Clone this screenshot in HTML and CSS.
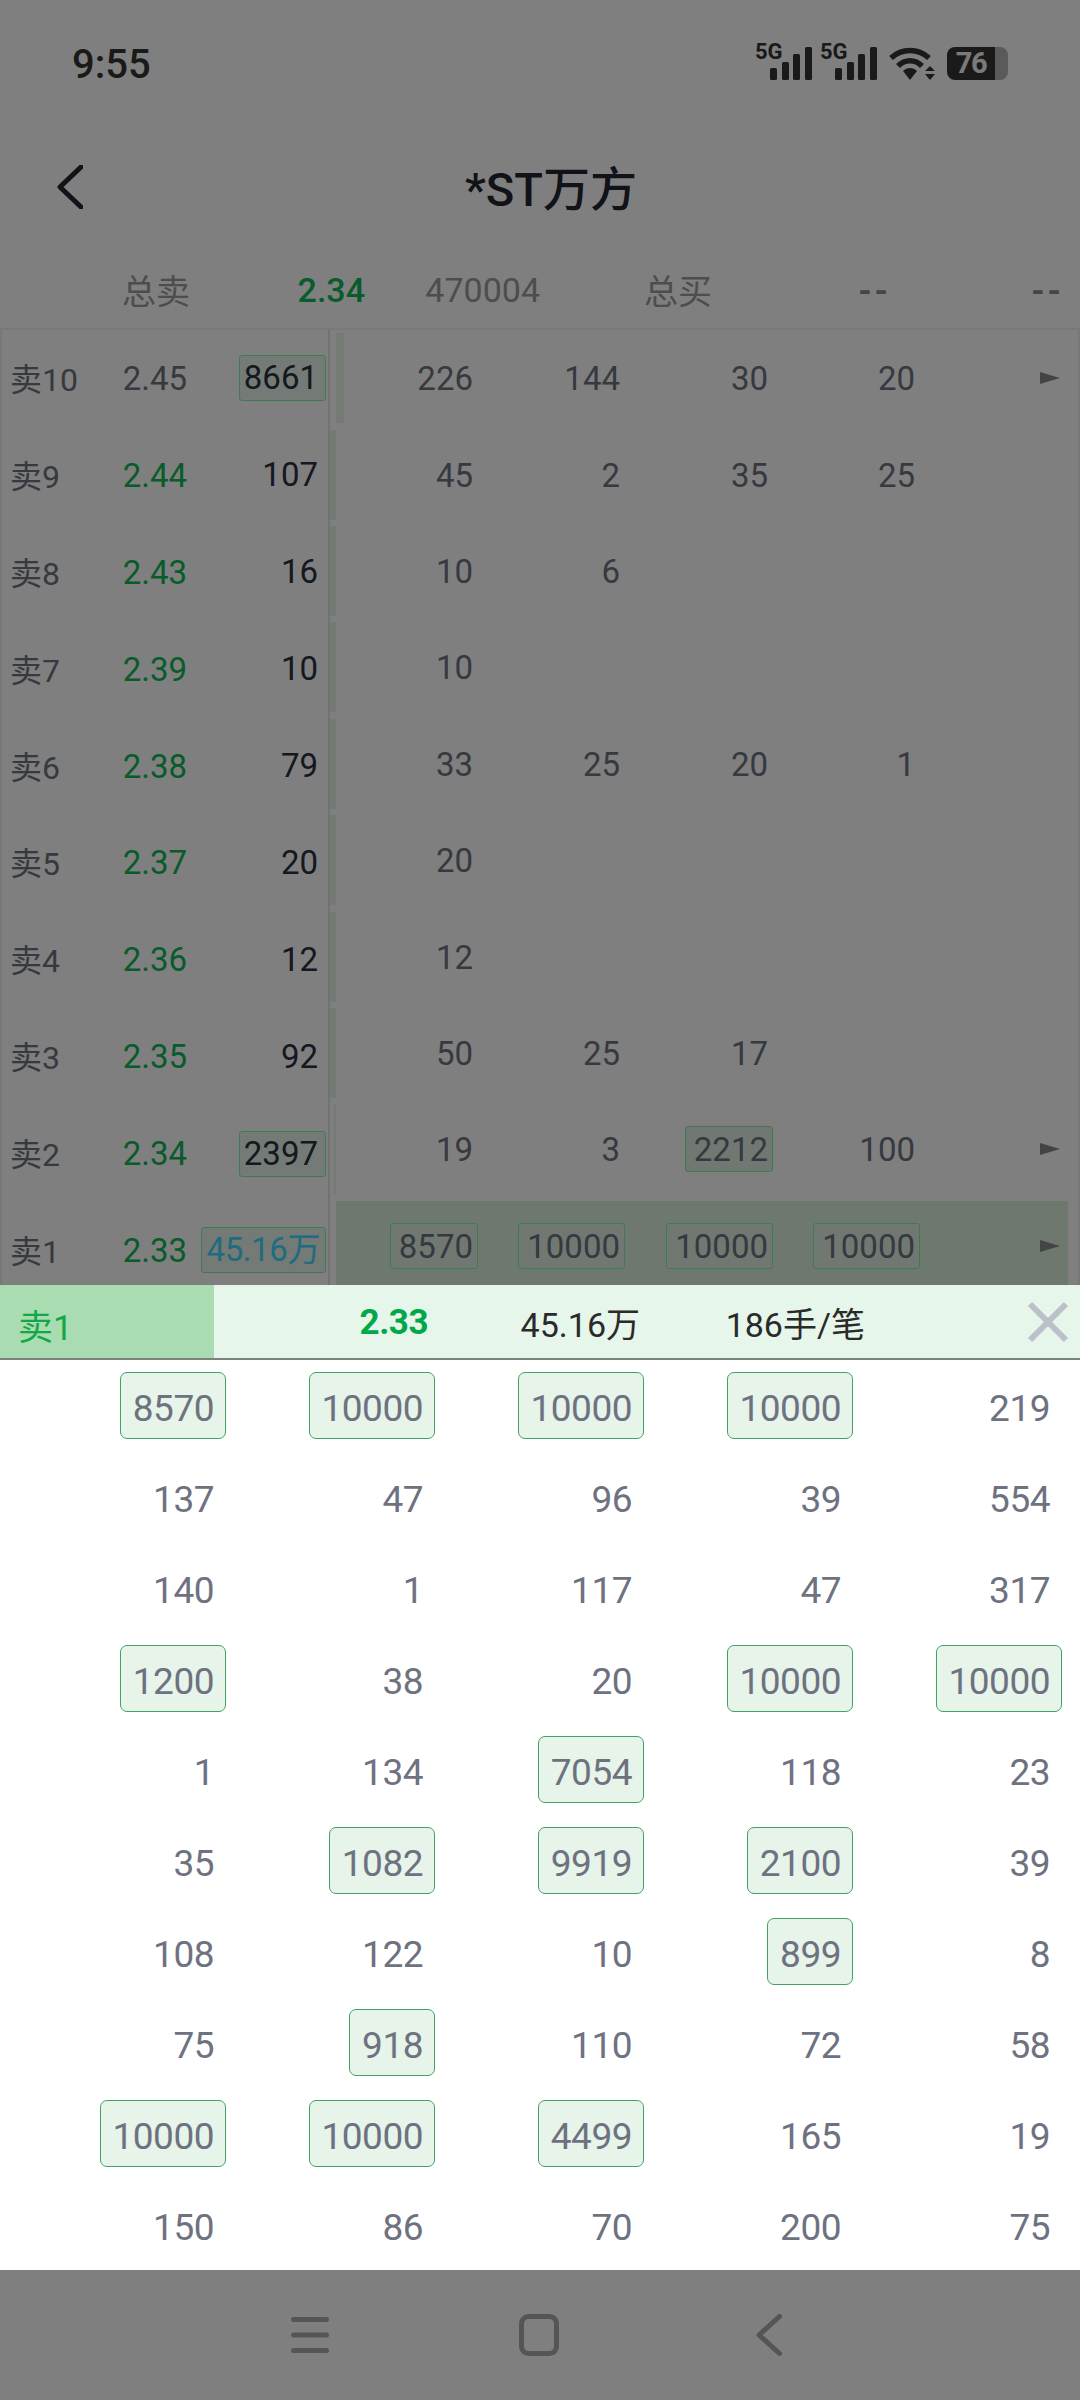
FILE: index.html
```html
<!DOCTYPE html>
<html lang="zh-CN">
<head>
    <meta charset="UTF-8">
    <meta name="viewport" content="width=device-width, initial-scale=1.0">
    <title>*ST万方</title>
    <link rel="stylesheet" href="styles.css">
</head>
<body>
    <div class="screen">
        <div class="top">
            <div class="status-bar">
                <span class="time">9:55</span>
                <div class="status-icons">
                    <svg class="signal" width="59" height="44" viewBox="0 -4 59 44">
                        <text x="0" y="17" class="net">5G</text>
                        <rect x="15" y="26" width="7" height="12" rx="1.5"/>
                        <rect x="27" y="20" width="7" height="18" rx="1.5"/>
                        <rect x="38" y="12" width="7" height="26" rx="1.5"/>
                        <rect x="50" y="5" width="7" height="33" rx="1.5"/>
                    </svg>
                    <svg class="signal" width="59" height="44" viewBox="0 -4 59 44">
                        <text x="0" y="17" class="net">5G</text>
                        <rect x="15" y="26" width="7" height="12" rx="1.5"/>
                        <rect x="27" y="20" width="7" height="18" rx="1.5"/>
                        <rect x="38" y="12" width="7" height="26" rx="1.5"/>
                        <rect x="50" y="5" width="7" height="33" rx="1.5"/>
                    </svg>
                    <svg class="wifi" width="46" height="34" viewBox="0 0 46 34">
                        <path d="M2 11 C13 1 29 1 40 11" fill="none" stroke="#343434" stroke-width="5.5"/>
                        <path d="M9 19 C16 12 26 12 33 19" fill="none" stroke="#343434" stroke-width="5.5"/>
                        <path d="M14 24 C18 20 24 20 28 24 L21 33 Z" fill="#343434"/>
                        <path d="M36 24 L41 19 L46 24 Z M36 27 L46 27 L41 33 Z" fill="#343434"/>
                    </svg>
                    <div class="battery">
                        <div class="battery-fill">76</div>
                        <div class="battery-rest"></div>
                    </div>
                </div>
            </div>

            <div class="title-bar">
                <svg class="back" width="26" height="44" viewBox="0 0 26 44">
                    <path d="M24 2 L3 22 L24 42" fill="none" stroke="#222730" stroke-width="5" stroke-linecap="round" stroke-linejoin="round"/>
                </svg>
                <h1>*ST万方</h1>
            </div>

            <div class="summary">
                <span>总卖</span>
                <span class="price-green bold">2.34</span>
                <span>470004</span>
                <span>总买</span>
                <span class="dash">--</span>
                <span class="dash">--</span>
            </div>

            <div class="book">
                <div class="sell-side">
                    <div class="sell-row"><span class="label">卖10</span><span class="price">2.45</span><span class="qty big">8661</span></div>
                    <div class="sell-row"><span class="label">卖9</span><span class="price price-green">2.44</span><span class="qty">107</span></div>
                    <div class="sell-row"><span class="label">卖8</span><span class="price price-green">2.43</span><span class="qty">16</span></div>
                    <div class="sell-row"><span class="label">卖7</span><span class="price price-green">2.39</span><span class="qty">10</span></div>
                    <div class="sell-row"><span class="label">卖6</span><span class="price price-green">2.38</span><span class="qty">79</span></div>
                    <div class="sell-row"><span class="label">卖5</span><span class="price price-green">2.37</span><span class="qty">20</span></div>
                    <div class="sell-row"><span class="label">卖4</span><span class="price price-green">2.36</span><span class="qty">12</span></div>
                    <div class="sell-row"><span class="label">卖3</span><span class="price price-green">2.35</span><span class="qty">92</span></div>
                    <div class="sell-row"><span class="label">卖2</span><span class="price price-green">2.34</span><span class="qty big">2397</span></div>
                    <div class="sell-row"><span class="label">卖1</span><span class="price price-green">2.33</span><span class="qty big wan">45.16万</span></div>
                </div>
                <div class="orders-side">
                    <div class="order-row">
                        <div class="gutter"></div>
                        <div class="cells bar-inner"><span>226</span><span>144</span><span>30</span><span>20</span><i class="arrow"></i></div>
                    </div>
                    <div class="order-row">
                        <div class="gutter"><div class="bar" style="width: 6px"></div></div>
                        <div class="cells"><span>45</span><span>2</span><span>35</span><span>25</span></div>
                    </div>
                    <div class="order-row">
                        <div class="gutter"><div class="bar" style="width: 6px"></div></div>
                        <div class="cells"><span>10</span><span>6</span></div>
                    </div>
                    <div class="order-row">
                        <div class="gutter"><div class="bar" style="width: 6px"></div></div>
                        <div class="cells"><span>10</span></div>
                    </div>
                    <div class="order-row">
                        <div class="gutter"><div class="bar" style="width: 6px"></div></div>
                        <div class="cells"><span>33</span><span>25</span><span>20</span><span>1</span></div>
                    </div>
                    <div class="order-row">
                        <div class="gutter"><div class="bar" style="width: 6px"></div></div>
                        <div class="cells"><span>20</span></div>
                    </div>
                    <div class="order-row">
                        <div class="gutter"><div class="bar" style="width: 6px"></div></div>
                        <div class="cells"><span>12</span></div>
                    </div>
                    <div class="order-row">
                        <div class="gutter"><div class="bar" style="width: 6px"></div></div>
                        <div class="cells"><span>50</span><span>25</span><span>17</span></div>
                    </div>
                    <div class="order-row">
                        <div class="gutter"><div class="bar" style="width: 2px"></div></div>
                        <div class="cells"><span>19</span><span>3</span><span class="big">2212</span><span>100</span><i class="arrow"></i></div>
                    </div>
                    <div class="order-row">
                        <div class="gutter"></div>
                        <div class="cells bar-full"><span class="big">8570</span><span class="big">10000</span><span class="big">10000</span><span class="big">10000</span><i class="arrow"></i></div>
                    </div>
                </div>
            </div>
        </div>

        <div class="panel">
            <div class="panel-head">
                <div class="panel-label">卖1</div>
                <span class="panel-price">2.33</span>
                <span class="panel-val val-qty">45.16万</span>
                <span class="panel-val val-avg">186手/笔</span>
                <svg class="close" width="42" height="42" viewBox="0 0 42 42">
                    <path d="M3 3 L39 39 M39 3 L3 39" fill="none" stroke="#bcc0c8" stroke-width="6"/>
                </svg>
            </div>
            <div class="panel-grid">
                <span class="cell box">8570</span><span class="cell box">10000</span><span class="cell box">10000</span><span class="cell box">10000</span><span class="cell">219</span>
                <span class="cell">137</span><span class="cell">47</span><span class="cell">96</span><span class="cell">39</span><span class="cell">554</span>
                <span class="cell">140</span><span class="cell">1</span><span class="cell">117</span><span class="cell">47</span><span class="cell">317</span>
                <span class="cell box">1200</span><span class="cell">38</span><span class="cell">20</span><span class="cell box">10000</span><span class="cell box">10000</span>
                <span class="cell">1</span><span class="cell">134</span><span class="cell box">7054</span><span class="cell">118</span><span class="cell">23</span>
                <span class="cell">35</span><span class="cell box">1082</span><span class="cell box">9919</span><span class="cell box">2100</span><span class="cell">39</span>
                <span class="cell">108</span><span class="cell">122</span><span class="cell">10</span><span class="cell box">899</span><span class="cell">8</span>
                <span class="cell">75</span><span class="cell box">918</span><span class="cell">110</span><span class="cell">72</span><span class="cell">58</span>
                <span class="cell box">10000</span><span class="cell box">10000</span><span class="cell box">4499</span><span class="cell">165</span><span class="cell">19</span>
                <span class="cell">150</span><span class="cell">86</span><span class="cell">70</span><span class="cell">200</span><span class="cell">75</span>
            </div>
        </div>

        <div class="nav-bar">
            <svg width="38" height="40" viewBox="0 0 38 40">
                <path d="M2.5 4.5 H35.5 M2.5 20 H35.5 M2.5 35.5 H35.5" fill="none" stroke="#aaa" stroke-width="5" stroke-linecap="round"/>
            </svg>
            <svg width="40" height="42" viewBox="0 0 40 42">
                <rect x="2.5" y="2.5" width="35" height="37" rx="7" fill="none" stroke="#aaa" stroke-width="5"/>
            </svg>
            <svg class="nav-back" width="26" height="42" viewBox="0 0 26 42">
                <path d="M23.5 2.5 L3 21 L23.5 39.5" fill="none" stroke="#aaa" stroke-width="5" stroke-linecap="round" stroke-linejoin="round"/>
            </svg>
        </div>

        <div class="dim"></div>
    </div>
</body>
</html>
```

FILE: styles.css
```css
* {
    margin: 0;
    padding: 0;
    box-sizing: border-box;
    font-family: Roboto, 'Noto Sans CJK SC', sans-serif;
}

body {
    background: #fff;
}

.screen {
    position: relative;
    width: 1080px;
    height: 2400px;
    overflow: hidden;
    background: #fff;
}

/* grey layer over everything but the panel */
.dim {
    position: absolute;
    top: 0;
    left: 0;
    right: 0;
    bottom: 0;
    background: rgba(0, 0, 0, 0.5);
    z-index: 1;
}

.top {
    height: 1285px;
    overflow: hidden;
}

.status-bar {
    height: 128px;
    display: flex;
    justify-content: space-between;
    align-items: center;
    padding: 0 70px 0 72px;
}

.time {
    font-size: 40px;
    font-weight: 500;
    color: #343434;
}

.status-icons {
    display: flex;
    align-items: center;
    gap: 6px;
    margin-top: -1px;
}

.signal {
    margin-bottom: 7px;
}

.signal rect {
    fill: #343434;
}

.net {
    font-family: Roboto, sans-serif;
    font-size: 22px;
    font-weight: 700;
    fill: #343434;
}

.wifi {
    margin: 0 6px 0 4px;
}

.battery {
    display: flex;
    align-items: center;
    width: 63px;
    height: 33px;
}

.battery-fill {
    width: 48px;
    height: 33px;
    background: #343434;
    border-radius: 8px 0 0 8px;
    color: #f4f4f4;
    font-size: 29px;
    font-weight: 700;
    letter-spacing: -1.5px;
    line-height: 33px;
    text-align: center;
}

.battery-rest {
    width: 13px;
    height: 33px;
    background: #b4b4b4;
    border-radius: 0 8px 8px 0;
}

.title-bar {
    position: relative;
    height: 120px;
    display: flex;
    justify-content: center;
    align-items: center;
}

.title-bar h1 {
    font-size: 47px;
    font-weight: 500;
    color: #222730;
    margin: 0 0 5px 22px;
}

.back {
    position: absolute;
    left: 57px;
    top: 37px;
}

.summary {
    height: 80px;
    display: grid;
    grid-template-columns: 190px 175px 175px 172px 175px 173px;
    align-items: center;
    padding-top: 3px;
    font-size: 34px;
    color: #9a9a9e;
    text-align: right;
}

.dash {
    font-weight: 700;
    letter-spacing: 3px;
    color: #8a8a8e;
    margin-right: -4px;
}

.bold {
    font-weight: 500;
}

.price-green {
    color: #10b655;
}

.book {
    display: flex;
    border-top: 2px solid #f0f0f0;
    border-left: 2px solid #f0f0f0;
    border-right: 2px solid #f0f0f0;
}

.sell-side {
    width: 328px;
    flex-shrink: 0;
    border-right: 2px solid #e4e4e4;
}

.sell-row {
    height: 96.9px;
    display: grid;
    grid-template-columns: 110px 67px 139px;
    align-items: center;
    padding-left: 8px;
    font-size: 33px;
}

.label,
.price:not(.price-green) {
    color: #6e7280;
}

.label {
    font-size: 32px;
    margin-top: -3px;
}

.price {
    justify-self: end;
}

.qty {
    justify-self: end;
    height: 46px;
    line-height: 44px;
    padding: 0 7px 0 4px;
    border: 1px solid transparent;
    border-radius: 3px;
    color: #2a303e;
}

.big {
    background: #e8f4ea;
    border: 1px solid #7cf5a6;
    border-radius: 3px;
}

.wan {
    color: #40d8ff;
    padding: 0 5px;
    letter-spacing: -0.4px;
}

.orders-side {
    flex: 1;
}

.order-row {
    height: 96.4px;
    display: flex;
    align-items: center;
}

.gutter {
    width: 6px;
    height: 90px;
    display: flex;
    justify-content: flex-end;
}

.bar {
    height: 100%;
    background: #e8f4e8;
}

.cells {
    width: 732px;
    height: 90px;
    display: grid;
    grid-template-columns: 142px 147px 148px 147px 148px;
    align-items: center;
    font-size: 33px;
    color: #6e7280;
}

.bar-inner {
    background: linear-gradient(#e8f4e8, #e8f4e8) left / 8px 100% no-repeat;
}

.bar-full {
    background: #def0dc;
}

.cells span {
    justify-self: end;
    height: 46px;
    line-height: 46px;
    padding: 0 4px;
    border: 1px solid transparent;
}

.cells span.big {
    padding-left: 8px;
    background: #e2f1e3;
    border-color: #7cf5a6;
    border-radius: 3px;
}

.arrow {
    grid-column: 5;
    margin-left: 120px;
    width: 0;
    height: 0;
    border-top: 6px solid transparent;
    border-bottom: 6px solid transparent;
    border-left: 20px solid #888;
}

/* stays above the grey layer */
.panel {
    position: relative;
    z-index: 2;
    height: 985px;
    background: #fff;
}

.panel-head {
    height: 75px;
    display: grid;
    grid-template-columns: 214px 214px 212px 225px 1fr;
    grid-template-rows: 73px;
    align-items: center;
    background: #e6f6ea;
    border-bottom: 2px solid #7d847e;
    font-size: 34px;
}

.panel-label {
    height: 73px;
    display: flex;
    align-items: center;
    padding: 6px 0 0 18px;
    background: #a9dcb0;
    color: #12a84a;
    font-size: 35px;
}

.panel-price {
    justify-self: end;
    color: #00a84a;
    font-weight: 700;
    font-size: 35px;
    letter-spacing: -0.5px;
    margin-top: 2px;
}

.panel-val {
    justify-self: end;
    color: #2a2a2a;
    margin-top: 2px;
}

.close {
    justify-self: end;
    margin-right: 11px;
}

.panel-grid {
    display: grid;
    grid-template-columns: repeat(5, 209px);
    grid-auto-rows: 91px;
    align-items: center;
    padding-left: 17px;
}

.cell {
    justify-self: end;
    height: 67px;
    line-height: 71px;
    padding: 0 11px 0 12px;
    border: 1px solid transparent;
    font-size: 37px;
    letter-spacing: -0.5px;
    color: #6e7280;
}

.box {
    background: #e6f4e9;
    border: 1px solid #44a166;
    border-radius: 7px;
}

.nav-bar {
    height: 130px;
    display: flex;
    align-items: center;
    gap: 190px;
    padding: 0 0 0 291px;
    background: #fff;
}

.nav-back {
    margin-left: 7px;
}
```
